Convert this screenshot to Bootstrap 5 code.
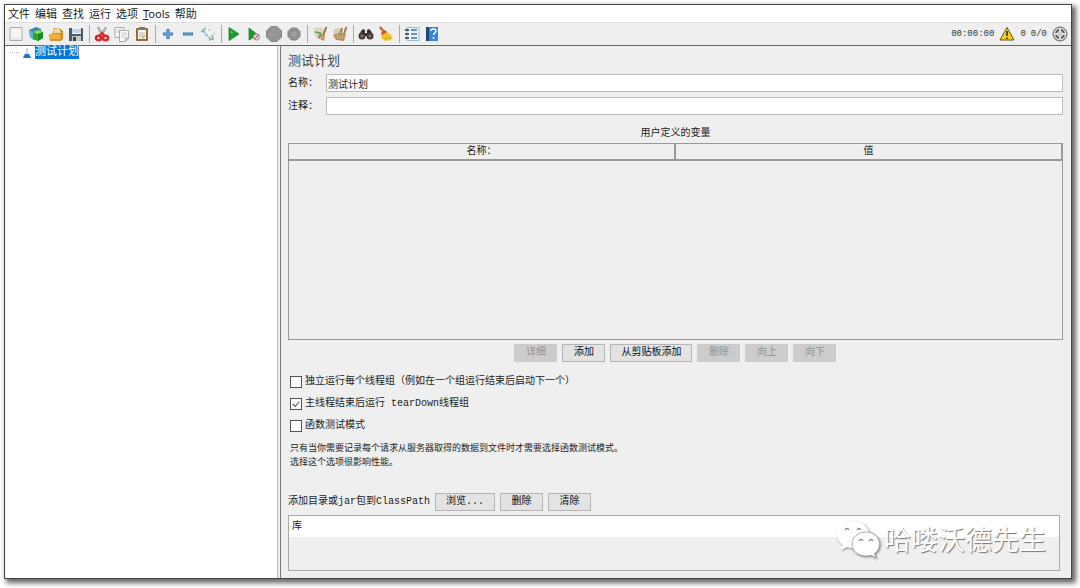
<!DOCTYPE html>
<html lang="zh-CN">
<head>
<meta charset="utf-8">
<meta name="viewport" content="width=device-width, initial-scale=1">
<title>测试计划</title>
<link href="https://cdn.jsdelivr.net/npm/bootstrap@5.3.0/dist/css/bootstrap.min.css" rel="stylesheet">
<style>
  body { background: #fff; color: #222; font: 10px/16px "Liberation Mono", "Noto Sans CJK SC", monospace; }
  .page { min-height: 100vh; padding: 4px 8px 9px 4px; }
  .app-window { border: 1px solid #444; background: #efefef; box-shadow: 3px 3px 5px 1px #666; }
  .menu-bar { background: #fff; height: 18px; padding: 0 3px; gap: 5px; border-bottom: 1px solid #ddd; font: 11px/17px "Noto Sans", "Noto Sans CJK SC", sans-serif; }
  .menu-bar a { color: #222; text-decoration: none; }
  .tool-bar { height: 23px; padding: 0 3px; border-bottom: 1px solid #666; }
  .tool-bar button { border: 0; padding: 0; background: none; width: 16px; height: 16px; display: flex; }
  .tool-bar svg { width: 16px; height: 16px; display: block; }
  .tool-sep { width: 1px; height: 18px; background: #aaa; margin: 0 4px 0 5px; }
  .status { font-size: 9px; gap: 5px; color: #333; }
  .tree-pane { width: 272px; margin-left: 1px; background: #fff; border-right: 1px solid #bbb; }
  .tree-row { padding-left: 4px; gap: 3px; }
  .tree-line { width: 9px; border-top: 1px dotted #bbb; }
  .tree-node { background: #0078d7; color: #fff; font-size: 11px; line-height: 13px; height: 13px; }
  .editor { margin-left: 2px; border-left: 1px solid #777; padding: 6px 8px 7px 7px; min-width: 0; }
  .plan-title { font-size: 13px; line-height: 20px; margin: 0 0 2px; font-weight: 400; color: #444; }
  .field-row { margin-bottom: 5px; }
  .field-row label { width: 38px; flex: none; padding-top: 2px; }
  .field-row input { height: 18px; border: 1px solid #bbb; border-radius: 0; padding: 0 1px; font-size: 10px; line-height: 16px; color: #222; background: #fff; }
  .vars-title { margin: 6px 0 1px; }
  .vars-box { border: 1px solid #999; min-height: 120px; }
  .vars-box table { width: 100%; table-layout: fixed; border-bottom: 2px solid #999; }
  .vars-box th { font-weight: 400; text-align: center; padding: 1px 0 0; height: 15px; line-height: 14px; }
  .vars-box th + th { border-left: 2px solid #999; }
  .vars-box th:last-child { border-right: 1px solid #999; }
  .sw-btn { height: 18px; min-width: 43px; padding: 0 10px; border: 1px solid #b4b4b4; border-radius: 0; background: #e3e3e3; color: #111; font-size: 10px; line-height: 16px; }
  .sw-btn:disabled { background: #ccc; border-color: #ccc; color: #929292; opacity: 1; }
  .row-gap { gap: 5px; }
  .options { margin-top: 12px; padding-left: 2px; gap: 6px; }
  .options .form-check-input { width: 12px; height: 12px; margin: 0; border: 1px solid #555; border-radius: 0; background-color: #fff; float: none; flex: none; }
  .options .form-check-input:checked { background-image: url("data:image/svg+xml,%3Csvg xmlns='http://www.w3.org/2000/svg' viewBox='0 0 12 12'%3E%3Cpath d='M2 6l3 3 5-6' fill='none' stroke='%23555' stroke-width='1.3'/%3E%3C/svg%3E"); background-size: 100%; }
  .options .form-check { gap: 3px; height: 16px; min-height: 0; }
  .hint { font-size: 9px; line-height: 14px; margin: 8px 0 23px; padding-left: 2px; }
  .class-path { gap: 5px; }
  .library { margin: 4px 3px 0 0; border: 1px solid #aaa; height: 56px; }
  .library th { background: #fff; font-weight: 400; height: 21px; padding: 0 3px; }
  .watermark { right: 25px; bottom: 19px; gap: 4px; color: #fff; font: 27px/36px "Noto Sans CJK SC", sans-serif; text-shadow: 1px 1px 1px #777; pointer-events: none; }
  .watermark svg { width: 44px; height: 40px; filter: drop-shadow(1px 1px 1px #888); }
</style>
</head>
<body>
<div class="page d-flex flex-column">
<div class="app-window d-flex flex-column flex-grow-1 position-relative">
  <nav class="menu-bar d-flex">
    <a href="#">文件</a><a href="#">编辑</a><a href="#">查找</a><a href="#">运行</a><a href="#">选项</a><a href="#"><u>T</u>ools</a><a href="#">帮助</a>
  </nav>
  <div class="tool-bar d-flex align-items-center">
    <div class="d-flex gap-1">
      <button aria-label="新建"><svg viewBox="0 0 16 16"><path d="M2 1.500h12v13H2z" fill="#f7f7f5" stroke="#aaa"/><path d="M3 12h10v2H3z" fill="#e6e6e6"/><path d="M11 2h3v3z" fill="#f0dfb8"/></svg></button>
      <button aria-label="模板"><svg viewBox="0 0 16 16"><path d="M1 4l7-3 5 2v8l-7 3-4-3z" fill="#3c86a8"/><path d="M1 4l5 2v8l-4-3z" fill="#5fb6c8"/><path d="M5 6l5-2 5 2v6l-5 3-5-2z" fill="#2fa52b"/><path d="M5 6l5 2 5-2-5-2z" fill="#85e069"/><path d="M10 8v7l5-3V6z" fill="#178a20"/></svg></button>
      <button aria-label="打开"><svg viewBox="0 0 16 16"><path d="M4 8l2-6h5l4 3v8H4z" fill="#c98a2c"/><path d="M6 3l5-1 2 5H5z" fill="#f1d9a8"/><path d="M1 8h11l3-2v7l-2 2H2z" fill="#d8922a"/><path d="M1 8h11v7H2z" fill="#f0b044"/><path d="M2 14h10" stroke="#c67e17"/></svg></button>
      <button aria-label="保存"><svg viewBox="0 0 16 16"><path d="M1 2h13l1 1v12H1z" fill="#4c5965"/><path d="M4 2h9v6H4z" fill="#edf3f8"/><path d="M4 4h9M4 6h9" stroke="#9fb6ca"/><path d="M4 10h9v5H4z" fill="#c3c8cc"/><path d="M5 11h3v4H5z" fill="#39434d"/></svg></button>
    </div>
    <span class="tool-sep"></span>
    <div class="d-flex gap-1">
      <button aria-label="剪切"><svg viewBox="0 0 16 16"><path d="M4 1l5 9M12 1L7 10" stroke="#999" stroke-width="2.500"/><path d="M4 1l5 9M12 1L7 10" stroke="#ddd" stroke-width=".7"/><g fill="none" stroke="#d72a32" stroke-width="2.600"><ellipse cx="4.500" cy="12" rx="2.500" ry="2.200"/><ellipse cx="11.500" cy="12" rx="2.500" ry="2.200"/></g><path d="M5 10l3-3 3 3" stroke="#d72a32" stroke-width="2" fill="none"/></svg></button>
      <button aria-label="复制"><svg viewBox="0 0 16 16"><path d="M1 1.500h9v10H1z" fill="#f5f5f5" stroke="#aaa"/><path d="M3 4h5M3 6h5" stroke="#ccc"/><path d="M5.500 4.500h9v8l-3 3h-6z" fill="#fafafa" stroke="#aaa"/><path d="M7 7h6M7 9h6M7 11h4" stroke="#ccc"/><path d="M11.500 15v-3h3" fill="#ddd" stroke="#aaa"/></svg></button>
      <button aria-label="粘贴"><svg viewBox="0 0 16 16"><rect x="2" y="2" width="12" height="13" rx="1" fill="#9a6d2c"/><path d="M4 4h8v9H4z" fill="#f6f6f3"/><path d="M5 1h6v3H5z" fill="#777"/><path d="M5 7h6M5 9h6M5 11h4" stroke="#bbb"/><path d="M9 13v-3h3" fill="#ccc" stroke="#aaa" stroke-width=".7"/></svg></button>
    </div>
    <span class="tool-sep"></span>
    <div class="d-flex gap-1">
      <button aria-label="展开"><svg viewBox="0 0 16 16"><path d="M8 3v10M3 8h10" stroke="#3477b5" stroke-width="3"/><path d="M8 4v8M4 8h8" stroke="#79b4e8" stroke-width="1"/></svg></button>
      <button aria-label="折叠"><svg viewBox="0 0 16 16"><path d="M3 8h10" stroke="#3477b5" stroke-width="3"/><path d="M4 8h8" stroke="#79b4e8"/></svg></button>
      <button aria-label="切换"><svg viewBox="0 0 16 16"><path d="M6 2L2 5l3 1M12 9l1 4-4 1" fill="none" stroke="#75bb87" stroke-width="1.500"/><path d="M3 5c3 2 3 6 9 8" fill="none" stroke="#7cb0d5" stroke-width="1.500" stroke-dasharray="3 1"/><path d="M8 3l2 2M13 8l2-1" stroke="#a5ca8b"/></svg></button>
    </div>
    <span class="tool-sep"></span>
    <div class="d-flex gap-1">
      <button aria-label="启动"><svg viewBox="0 0 16 16"><path d="M3 1.500L13 8l-10 6.500z" fill="#189a27" stroke="#137b20" stroke-width=".7"/><path d="M4 4l5 3-5 1z" fill="#37b443"/></svg></button>
      <button aria-label="不停顿启动"><svg viewBox="0 0 16 16"><path d="M3 2l9 7-9 5z" fill="#189a27" stroke="#137b20" stroke-width=".7"/><circle cx="10.500" cy="11" r="3" fill="#eee" stroke="#878787"/><path d="M8.500 13l4-4" stroke="#d15a5a" stroke-width="1.200"/></svg></button>
      <button aria-label="停止" disabled><svg viewBox="0 0 16 16"><path d="M5 .5h6L15.500 5v6L11 15.500H5L.5 11V5z" fill="#949494" stroke="#848484"/><path d="M4 7h8v3H4z" fill="#9b9b9b"/></svg></button>
      <button aria-label="关闭" disabled><svg viewBox="0 0 16 16"><path d="M5.500 2h5L14 5.500v5L10.500 14h-5L2 10.500v-5z" fill="#919191" stroke="#818181"/><path d="M6 6l4 4M10 6l-4 4" stroke="#a3a3a3" stroke-width="1.500"/></svg></button>
    </div>
    <span class="tool-sep"></span>
    <div class="d-flex gap-1">
      <button aria-label="清除"><svg viewBox="0 0 16 16"><path d="M1 2l8-1 3 3-1 9H5L2 9z" fill="#ddd8c8"/><path d="M14.500 1L11 9" stroke="#a77a45" stroke-width="2"/><path d="M6 9l7-1-1 7-6-3z" fill="#b48a57"/><path d="M8 10l1 3M11 9l-1 4" stroke="#dcbc8d"/><path d="M3 6l5 1 1 3" stroke="#67a75a" stroke-width="2" fill="none"/></svg></button>
      <button aria-label="清除全部"><svg viewBox="0 0 16 16"><path d="M2 3l6-1 3 3-2 8H4L1 9z" fill="#d6cebd"/><path d="M10 2L8 9M14.500 1l-3 8" stroke="#a77a45" stroke-width="2"/><path d="M1 9l6-2 7 1-2 7-8-1z" fill="#b49165"/><path d="M5 9l1 4M8 9v4M11 9l-1 4" stroke="#cfb083"/></svg></button>
    </div>
    <span class="tool-sep"></span>
    <div class="d-flex gap-1">
      <button aria-label="搜索"><svg viewBox="0 0 16 16"><path d="M3 5l2-2 2 1v3h2V4l2-1 2 2 2 5H1z" fill="#36302d"/><circle cx="4" cy="10" r="3.500" fill="#423934"/><circle cx="12" cy="10" r="3.500" fill="#423934"/><circle cx="4" cy="10" r="1.500" fill="#8b7369"/><circle cx="12" cy="10" r="1.500" fill="#8b7369"/></svg></button>
      <button aria-label="重置搜索"><svg viewBox="0 0 16 16"><path d="M2 1l4 5" stroke="#bd6a31" stroke-width="2.500"/><path d="M3 8l5-3 5 4 2 4-7 2-4-2z" fill="#f2c329"/><path d="M3 7l4-3 2 2-5 3z" fill="#d5482c"/><path d="M7 13l2-2M11 13l1-2" stroke="#d09a1c"/></svg></button>
    </div>
    <span class="tool-sep"></span>
    <div class="d-flex gap-1">
      <button aria-label="函数助手"><svg viewBox="0 0 16 16"><path d="M3 1.500h12v13H3z" fill="#e8f3fc" stroke="#9bc"/><path d="M7 4h6M7 8h6M7 12h6" stroke="#3c78a8" stroke-width="1.300"/><path d="M1 4h4M1 8h4M1 12h4" stroke="#333" stroke-width="1.300"/></svg></button>
      <button aria-label="帮助"><svg viewBox="0 0 16 16"><path d="M2 1h12v14H2z" fill="#3c84d8"/><path d="M2 1h3v14H2z" fill="#25466d"/><path d="M7 5c0-3 5-2.500 5 0 0 2-2.500 2-2.500 4M9.500 11v2" stroke="#fff" stroke-width="1.500" fill="none"/></svg></button>
    </div>
    <div class="status d-flex align-items-center ms-auto">
      <span>00:00:00</span>
      <svg viewBox="0 0 16 16"><path d="M8 1.500L15 14H1z" fill="#f4d21e" stroke="#655611"/><path d="M8 5v5M8 11.500v1.500" stroke="#222" stroke-width="1.500"/></svg>
      <span>0</span><span>0/0</span>
      <svg viewBox="0 0 16 16"><circle cx="8" cy="8" r="7" fill="#ccc" stroke="#666"/><circle cx="8" cy="8" r="4" fill="none" stroke="#555" stroke-width="1.800"/><path d="M8 2v4M8 10v4M2 8h4M10 8h4" stroke="#e2e2e2" stroke-width="2"/></svg>
    </div>
  </div>
  <div class="d-flex flex-grow-1">
    <aside class="tree-pane flex-shrink-0">
      <div class="tree-row d-flex align-items-center">
        <span class="tree-line"></span>
        <svg width="10" height="12" viewBox="0 0 10 12"><path d="M4 1h2v4l3 5v1H1v-1l3-5z" fill="#c7dded"/><path d="M3 7h4l2 4H1z" fill="#2477b8"/></svg>
        <span class="tree-node">测试计划</span>
      </div>
    </aside>
    <main class="editor d-flex flex-column flex-grow-1">
      <h1 class="plan-title">测试计划</h1>
      <div class="field-row d-flex align-items-center"><label for="name">名称：</label><input id="name" class="form-control" type="text" value="测试计划"></div>
      <div class="field-row d-flex align-items-center"><label for="comment">注释：</label><input id="comment" class="form-control" type="text"></div>
      <div class="vars-title text-center">用户定义的变量</div>
      <div class="vars-box flex-grow-1">
        <table><thead><tr><th>名称：</th><th>值</th></tr></thead></table>
      </div>
      <div class="row-gap d-flex justify-content-center mt-1">
        <button class="sw-btn" disabled>详细</button>
        <button class="sw-btn">添加</button>
        <button class="sw-btn">从剪贴板添加</button>
        <button class="sw-btn" disabled>删除</button>
        <button class="sw-btn" disabled>向上</button>
        <button class="sw-btn" disabled>向下</button>
      </div>
      <div class="options d-flex flex-column">
        <div class="form-check d-flex align-items-center p-0 m-0"><input class="form-check-input" type="checkbox" id="serial"><label for="serial">独立运行每个线程组（例如在一个组运行结束后启动下一个）</label></div>
        <div class="form-check d-flex align-items-center p-0 m-0"><input class="form-check-input" type="checkbox" id="teardown" checked><label for="teardown">主线程结束后运行 tearDown线程组</label></div>
        <div class="form-check d-flex align-items-center p-0 m-0"><input class="form-check-input" type="checkbox" id="functional"><label for="functional">函数测试模式</label></div>
      </div>
      <p class="hint">只有当你需要记录每个请求从服务器取得的数据到文件时才需要选择函数测试模式。<br>选择这个选项很影响性能。</p>
      <div class="class-path d-flex align-items-center">
        <span>添加目录或jar包到ClassPath</span>
        <button class="sw-btn">浏览...</button>
        <button class="sw-btn">删除</button>
        <button class="sw-btn">清除</button>
      </div>
      <div class="library"><table class="w-100"><thead><tr><th>库</th></tr></thead></table></div>
    </main>
  </div>
  <div class="watermark position-absolute d-flex align-items-center">
    <svg viewBox="0 0 44 40"><path d="M17 2C8 2 1 8 1 15.500c0 4.500 2.500 8 6 10.500l-2 5 6-3c2 .7 4 1 6 1 9 0 16-6 16-13.500S26 2 17 2z" fill="#fff"/><path d="M30 13c-8 0-14 5-14 12s6 12 14 12c2 0 3.500-.3 5-.8l5 2.800-1.500-4.500c3-2 5-5.500 5-9.500 0-7-6-12-13.500-12z" fill="#fff" stroke="#999" stroke-width=".8"/><g fill="none" stroke="#888" stroke-width="1.300"><path d="M9 11q2-3 4 0M21 11q2-3 4 0M23 22q2-3 4 0M33 22q2-3 4 0"/></g></svg>
    <span>哈喽沃德先生</span>
  </div>
</div>
</div>
<script src="https://cdn.jsdelivr.net/npm/bootstrap@5.3.0/dist/js/bootstrap.bundle.min.js"></script>
</body>
</html>
